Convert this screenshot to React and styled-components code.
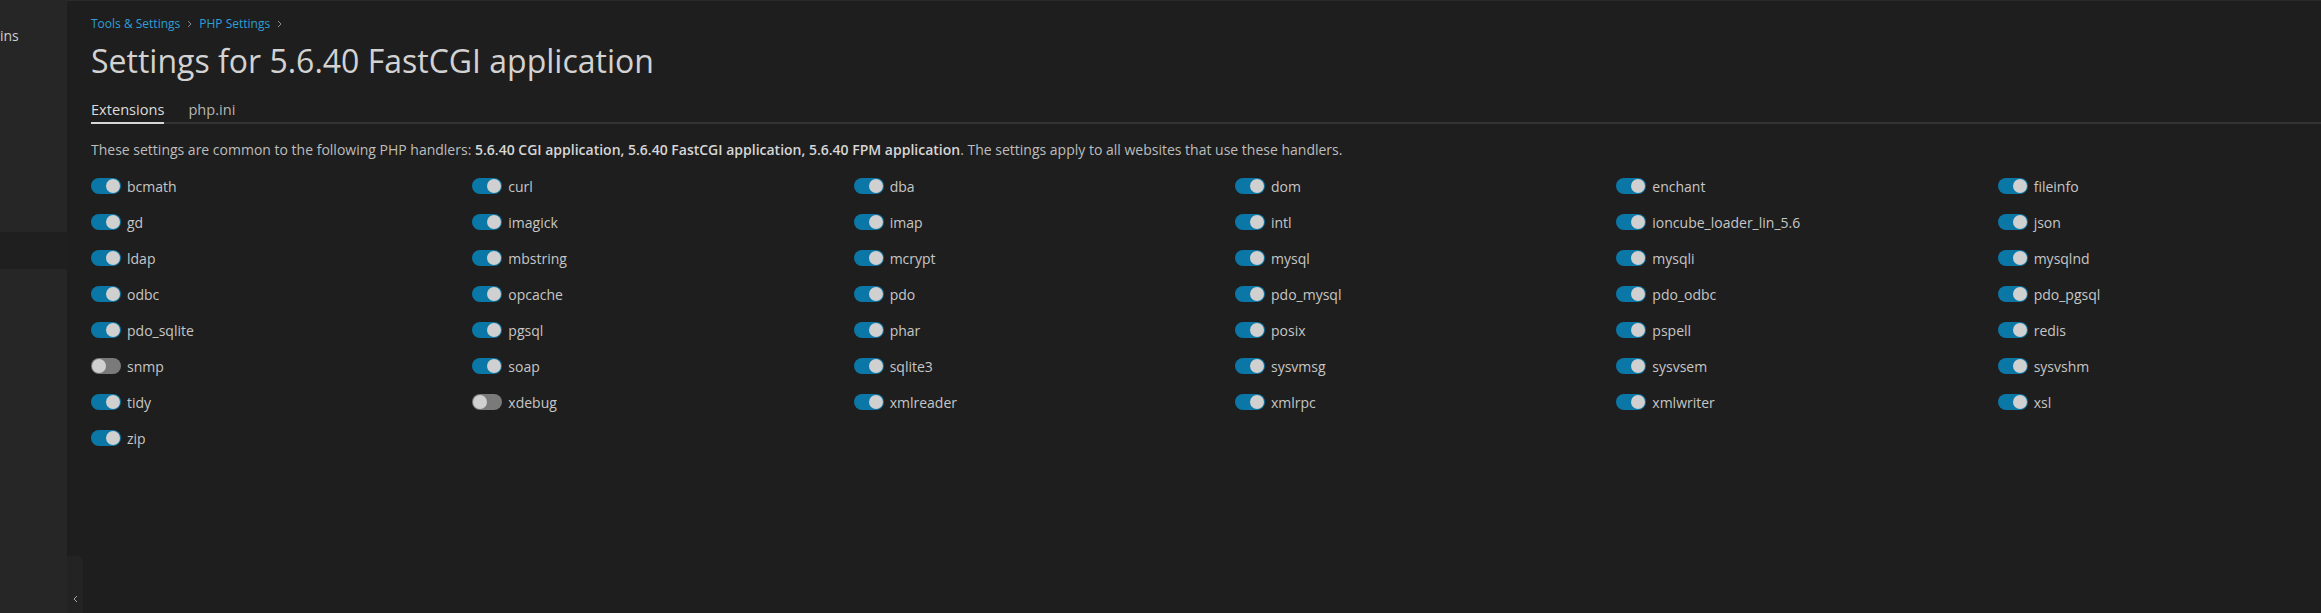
import React from "react";
import styled, { createGlobalStyle } from "styled-components";

const Global = createGlobalStyle`
  html, body { margin: 0; padding: 0; background: #1e1e1e; }
  body { font-family: "Open Sans", "Noto Sans", sans-serif; overflow: hidden; }
  * { box-sizing: border-box; }
`;

const Shell = styled.div`
  display: flex;
  width: 2321px;
  height: 613px;
  overflow: hidden;
`;

const Sidebar = styled.nav`
  width: 67px;
  flex: none;
  background: #262626;
  display: flex;
  flex-direction: column;
  padding-top: 24px;
  overflow: hidden;
`;

const NavItem = styled.div`
  height: ${(p) => p.$h || 37}px;
  display: flex;
  align-items: center;
  font-size: 14px;
  color: #cfcfcf;
  background: ${(p) => (p.$active ? "#1f1f1f" : "transparent")};
  white-space: nowrap;
`;

const Main = styled.main`
  position: relative;
  flex: 1;
  min-width: 0;
  border-top: 1px solid #2a2a2a;
  padding: 15px 24px 0 24px;
  background: #1e1e1e;
`;

const Breadcrumbs = styled.div`
  display: flex;
  align-items: center;
  gap: 7px;
  height: 16px;
  font-size: 12px;
  line-height: 16px;
`;

const Crumb = styled.a`
  color: #2f9fd6;
  text-decoration: none;
`;

const Title = styled.h1`
  margin: 9px 0 0 0;
  font-size: 32px;
  line-height: 40px;
  font-weight: 400;
  color: #d2d2d2;
  white-space: nowrap;
`;

const TabBar = styled.div`
  display: flex;
  gap: 24px;
  margin: 18px -24px 0 0;
  border-bottom: 2px solid #333333;
`;

const Tab = styled.div`
  font-size: 14.6px;
  line-height: 20px;
  padding-bottom: 3px;
  margin-bottom: -2px;
  color: ${(p) => (p.$active ? "#dcdcdc" : "#b5b5b5")};
  border-bottom: 2px solid ${(p) => (p.$active ? "#d6d6d6" : "transparent")};
`;

const Description = styled.p`
  margin: 17px 0 0 0;
  font-size: 14px;
  line-height: 18px;
  color: #bdbdbd;
  white-space: nowrap;
  b { font-weight: 600; color: #d6d6d6; }
`;

const Grid = styled.div`
  margin-top: 15px;
  display: grid;
  grid-template-columns: repeat(6, minmax(0, 1fr));
  column-gap: 82px;
  row-gap: 12px;
`;

const Item = styled.label`
  display: flex;
  align-items: center;
  gap: 6px;
  height: 24px;
  font-size: 14px;
  color: #c6c6c6;
  white-space: nowrap;
`;

const Track = styled.span`
  position: relative;
  width: 30px;
  height: 16px;
  border-radius: 8px;
  flex: none;
  background: ${(p) => (p.$on ? "#0a77a6" : "#7a7a7a")};
`;

const Knob = styled.span`
  position: absolute;
  top: 1px;
  left: ${(p) => (p.$on ? "15px" : "1px")};
  width: 14px;
  height: 14px;
  border-radius: 50%;
  background: #d0d0d0;
`;

const CollapseButton = styled.button`
  position: absolute;
  left: 0;
  bottom: 0;
  width: 16px;
  height: 57px;
  border: none;
  padding: 0 0 10px 0;
  background: #232323;
  border-top-right-radius: 5px;
  display: flex;
  align-items: flex-end;
  justify-content: center;
`;

const Chevron = ({ dir = "right", color = "#8a8a8a", w = 5, h = 8 }) => (
  <svg width={w} height={h} viewBox="0 0 5 8" fill="none">
    {dir === "right" ? (
      <path d="M1 1l3 3-3 3" stroke={color} strokeWidth="1" />
    ) : (
      <path d="M4 1L1 4l3 3" stroke={color} strokeWidth="1" />
    )}
  </svg>
);

const extensions = [
  ["bcmath", 1], ["curl", 1], ["dba", 1], ["dom", 1], ["enchant", 1], ["fileinfo", 1],
  ["gd", 1], ["imagick", 1], ["imap", 1], ["intl", 1], ["ioncube_loader_lin_5.6", 1], ["json", 1],
  ["ldap", 1], ["mbstring", 1], ["mcrypt", 1], ["mysql", 1], ["mysqli", 1], ["mysqlnd", 1],
  ["odbc", 1], ["opcache", 1], ["pdo", 1], ["pdo_mysql", 1], ["pdo_odbc", 1], ["pdo_pgsql", 1],
  ["pdo_sqlite", 1], ["pgsql", 1], ["phar", 1], ["posix", 1], ["pspell", 1], ["redis", 1],
  ["snmp", 0], ["soap", 1], ["sqlite3", 1], ["sysvmsg", 1], ["sysvsem", 1], ["sysvshm", 1],
  ["tidy", 1], ["xdebug", 0], ["xmlreader", 1], ["xmlrpc", 1], ["xmlwriter", 1], ["xsl", 1],
  ["zip", 1],
];

export default function App() {
  return (
    <>
      <Global />
      <Shell>
        <Sidebar>
          <NavItem $h={22}>ins</NavItem>
          <NavItem $h={186} />
          <NavItem $active />
        </Sidebar>
        <Main>
          <Breadcrumbs>
            <Crumb href="#">Tools &amp; Settings</Crumb>
            <Chevron />
            <Crumb href="#">PHP Settings</Crumb>
            <Chevron />
          </Breadcrumbs>
          <Title>Settings for 5.6.40 FastCGI application</Title>
          <TabBar>
            <Tab $active>Extensions</Tab>
            <Tab>php.ini</Tab>
          </TabBar>
          <Description>
            These settings are common to the following PHP handlers:{" "}
            <b>5.6.40 CGI application, 5.6.40 FastCGI application, 5.6.40 FPM application</b>. The
            settings apply to all websites that use these handlers.
          </Description>
          <Grid>
            {extensions.map(([name, on]) => (
              <Item key={name}>
                <Track $on={!!on}>
                  <Knob $on={!!on} />
                </Track>
                {name}
              </Item>
            ))}
          </Grid>
          <CollapseButton aria-label="Collapse">
            <Chevron dir="left" color="#a8a8a8" />
          </CollapseButton>
        </Main>
      </Shell>
    </>
  );
}
